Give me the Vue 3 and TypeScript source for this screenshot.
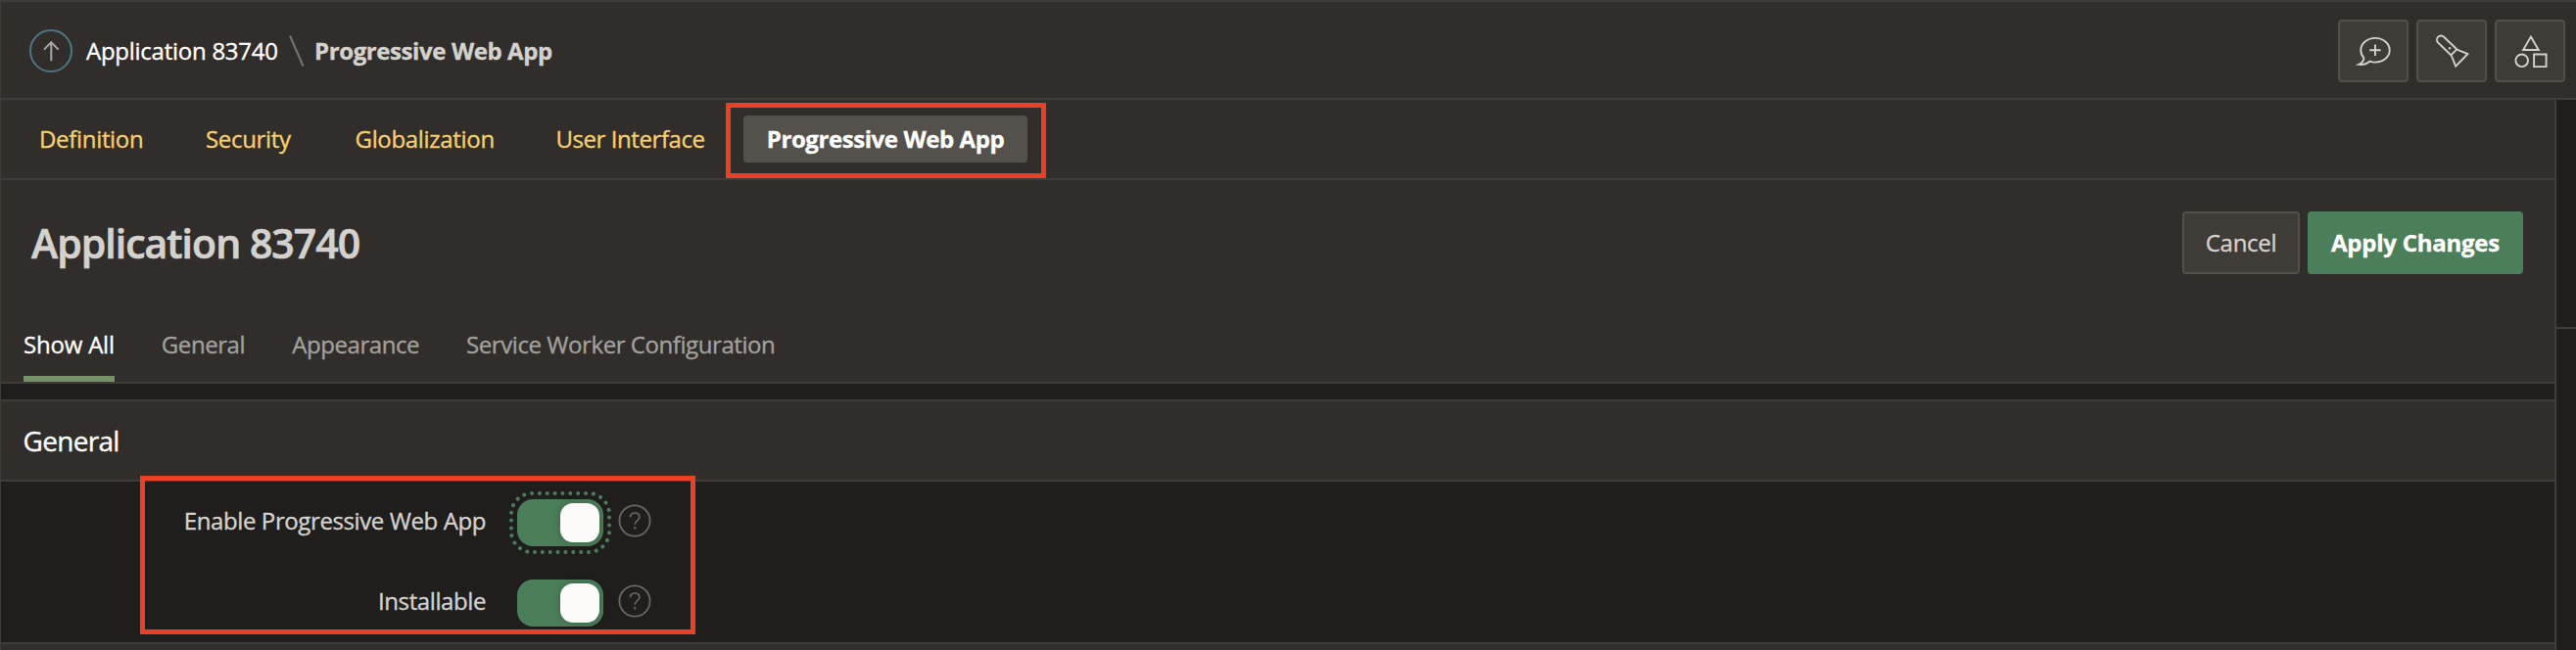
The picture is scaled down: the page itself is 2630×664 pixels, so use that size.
<script setup lang="ts">
import { ref } from 'vue'

interface Setting { label: string; on: boolean; focused: boolean }

const navItems: string[] = ['Definition', 'Security', 'Globalization', 'User Interface']
const tabs: string[] = ['Show All', 'General', 'Appearance', 'Service Worker Configuration']
const activeTab = ref<string>('Show All')
const settings = ref<Setting[]>([
  { label: 'Enable Progressive Web App', on: true, focused: true },
  { label: 'Installable', on: true, focused: false },
])
</script>

<template>
  <div class="page">
    <header class="topbar">
      <svg class="up" viewBox="0 0 44 44" fill="none">
        <circle cx="22" cy="22" r="21" stroke="#4d7687" stroke-width="2" />
        <path d="M22.3 32.3V13.2M15 20.6l7.3-7.5 7.3 7.5" stroke="#aaa7a4" stroke-width="2" />
      </svg>
      <a class="crumb">Application 83740</a>
      <svg class="slash" viewBox="0 0 18 34" fill="none"><path d="M2 1.5l13.5 31" stroke="#777471" stroke-width="2" /></svg>
      <strong class="crumb current">Progressive Web App</strong>
      <div class="tools">
        <button class="tool" aria-label="Feedback">
          <svg viewBox="0 0 40 40">
            <path d="M10.5 27.3C8.5 25 7.3 22.3 7.3 19.3 7.3 12.3 13.9 6.9 22 6.9s14.7 5.4 14.7 12.4S30.1 31.6 22 31.6c-2.1 0-4-.3-5.7-.9-2.8 2.5-6.9 3.6-11.1 3.2 3.3-1.5 5.1-3.9 5.3-6.6zM22 13.6v11.4M16.3 19.3h11.4" />
          </svg>
        </button>
        <button class="tool" aria-label="Search">
          <svg viewBox="0 0 40 40">
            <path d="M19.3 24.3L6.2 11.6a4.15 4.15 0 0 1 5.9-5.9l13.2 12.6zM25.3 18.3c3.2 2.1 7.4 2.8 11.1 4.9L24.2 35.6c-2-4.1-2.5-7.9-4.9-11.3" />
            <circle class="dot" cx="18" cy="17.3" r="1.2" />
          </svg>
        </button>
        <button class="tool" aria-label="Shared Components">
          <svg viewBox="0 0 40 40">
            <path d="M20.9 5.6l7.9 13.4H13.1zM24.1 23.5h12.5v12.6H24.1z" />
            <circle cx="11.7" cy="29.8" r="6.3" />
          </svg>
        </button>
      </div>
    </header>

    <div class="body">
      <main class="main">
        <nav class="subnav">
          <a v-for="item in navItems" :key="item">{{ item }}</a>
          <span class="pill">Progressive Web App<span class="mark mark-nav"></span></span>
        </nav>

        <section class="heading">
          <h1>Application 83740</h1>
          <button class="btn">Cancel</button>
          <button class="btn primary">Apply Changes</button>
        </section>

        <div class="tabs">
          <a v-for="tab in tabs" :key="tab" :class="{ active: tab === activeTab }" @click="activeTab = tab">{{ tab }}</a>
        </div>

        <h2 class="region-title">General</h2>
        <section class="region">
          <div v-for="row in settings" :key="row.label" class="row">
            <label>{{ row.label }}</label>
            <button class="switch" :class="{ focused: row.focused }" role="switch" :aria-checked="row.on" @click="row.on = !row.on">
              <span class="knob"></span>
              <svg v-if="row.focused" class="ring" viewBox="0 0 104 64">
                <rect x="2" y="2" width="100" height="60" rx="21" pathLength="288" />
              </svg>
            </button>
            <svg class="help" viewBox="0 0 34 34" fill="none">
              <circle cx="17" cy="17" r="15.6" stroke="#696663" stroke-width="1.8" />
              <path d="M12.4 13.2c.2-2.6 2.1-4.2 4.7-4.2 2.7 0 4.7 1.7 4.7 4.2 0 3.8-4.7 3.5-4.7 7.6" stroke="#696663" stroke-width="1.7" />
              <circle cx="17.2" cy="24.3" r="1.2" fill="#696663" />
            </svg>
          </div>
          <span class="mark mark-region"></span>
        </section>
        <div class="next"></div>
      </main>
      <aside class="side"><div class="side-top"></div></aside>
    </div>
  </div>
</template>

<style>
body { margin: 0; background: #201e1c; }
</style>

<style scoped>
* { box-sizing: border-box; }
.page { width: 2630px; height: 664px; overflow: hidden; display: flex; flex-direction: column; background: #201e1c; border-left: 1px solid #403c38; font: 400 24px/32px "Open Sans", "Noto Sans", sans-serif; letter-spacing: -0.43px; -webkit-text-stroke: 0.35px currentColor; color: #d4d2cf; white-space: nowrap; }
button { font: inherit; letter-spacing: inherit; color: inherit; padding: 0; }
.topbar { flex: none; height: 102px; display: flex; align-items: center; padding: 2px 11px 0 29px; background: #312d2a; border-top: 2px solid #403c38; border-bottom: 2px solid #403c38; }
.up { width: 44px; height: 44px; margin-right: 14px; }
.crumb { width: 206px; color: #fff; letter-spacing: -0.26px; }
.slash { width: 18px; height: 34px; margin: 0 9px 0 0; }
.crumb.current { width: auto; font-weight: 700; color: #d4d2cf; letter-spacing: -0.4px; }
.tools { margin-left: auto; display: flex; gap: 8px; }
.tool { width: 72px; height: 64px; display: grid; place-items: center; background: #3f3b37; border: 2px solid #53504b; border-radius: 4px; }
.tool svg { width: 40px; height: 40px; fill: none; stroke: #d4d2cc; stroke-width: 1.9; }
.tool .dot { fill: #d4d2cc; stroke: none; }
.body { flex: 1; min-height: 0; display: flex; }
.main { width: 2609px; border-right: 2px solid #403c38; display: flex; flex-direction: column; }
.subnav { height: 82px; display: grid; grid-template-columns: 170px 152.5px 205px 190.5px 290px; align-items: center; padding-left: 39px; background: #312d2a; border-bottom: 2px solid #403c38; color: #f5d070; }
.subnav a:nth-child(-n+3) { letter-spacing: -0.32px; }
.pill { position: relative; width: 290px; height: 48px; line-height: 48px; margin-left: 1px; text-align: center; background: #54504b; border-radius: 4px; font-weight: 700; color: #fff; letter-spacing: -0.42px; }
.heading { height: 128px; display: flex; align-items: center; gap: 8px; padding: 0 32px 0 31px; background: #312d2a; }
h1 { margin: 0 auto 0 0; font-size: 41px; line-height: 56px; font-weight: 600; letter-spacing: -0.97px; -webkit-text-stroke-width: 0.7px; }
.btn { width: 120px; height: 64px; background: #3f3b37; border: 2px solid #53504b; border-radius: 4px; letter-spacing: -0.3px; }
.btn.primary { width: 220px; background: #4b7f59; border-color: #4b7f59; font-weight: 700; color: #fff; letter-spacing: -0.25px; }
.tabs { height: 80px; display: flex; gap: 48px; padding-left: 23px; background: #312d2a; border-bottom: 2px solid #403c38; color: #a3a09d; }
.tabs a { height: 78px; line-height: 80px; }
.tabs .active { color: #fff; border-bottom: 6px solid #759269; letter-spacing: -0.2px; }
.region-title { height: 84px; margin: 16px 0 0; padding-left: 22.5px; font-size: 28px; line-height: 80px; font-weight: 400; letter-spacing: -0.7px; color: #fff; background: #312d2a; border-top: 2px solid #403c38; border-bottom: 2px solid #403c38; }
.region { position: relative; height: 164px; }
.row { height: 82px; display: flex; align-items: flex-start; padding-top: 18px; }
.row label { width: 495px; line-height: 44px; text-align: right; letter-spacing: -0.4px; }
.switch { position: relative; width: 88px; height: 48px; margin-left: 32px; background: #4b7f59; border: 0; border-radius: 16px; }
.knob { position: absolute; top: 4px; right: 4px; width: 40px; height: 40px; border-radius: 13px; background: #fcfbfa; box-shadow: 0 0 8px rgba(0, 0, 0, 0.25); }
.ring { position: absolute; left: -8px; top: -8px; width: 104px; height: 64px; fill: none; stroke: #4b7f59; stroke-width: 4; stroke-linecap: round; stroke-dasharray: 0.01 7.99; }
.help { width: 34px; height: 34px; margin: 5px 0 0 15px; }
.next { flex: 1; background: #312d2a; border-top: 2px solid #403c38; }
.side { flex: 1; }
.side-top { height: 234px; border-bottom: 2px solid #403c38; }
.mark { position: absolute; border: 5px solid #ea4026; pointer-events: none; }
.mark-nav { left: -18px; top: -13px; width: 327px; height: 77px; }
.mark-region { left: 142px; top: -6px; width: 567px; height: 162px; }
</style>
